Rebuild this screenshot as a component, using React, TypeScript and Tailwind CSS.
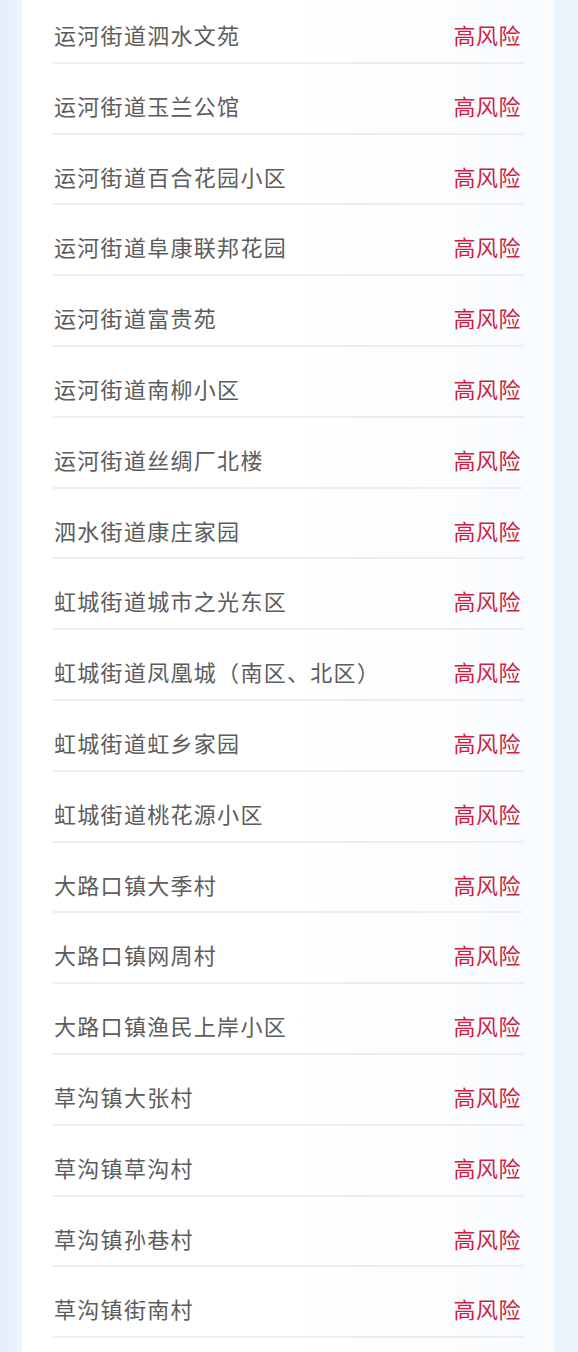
import React from "react";

const items = [
  "运河街道泗水文苑",
  "运河街道玉兰公馆",
  "运河街道百合花园小区",
  "运河街道阜康联邦花园",
  "运河街道富贵苑",
  "运河街道南柳小区",
  "运河街道丝绸厂北楼",
  "泗水街道康庄家园",
  "虹城街道城市之光东区",
  "虹城街道凤凰城（南区、北区）",
  "虹城街道虹乡家园",
  "虹城街道桃花源小区",
  "大路口镇大季村",
  "大路口镇网周村",
  "大路口镇渔民上岸小区",
  "草沟镇大张村",
  "草沟镇草沟村",
  "草沟镇孙巷村",
  "草沟镇街南村",
];

export default function App() {
  return (
    <div
      className="w-[578px] h-[1352px] overflow-hidden flex bg-[#e9f4fc]"
      style={{ fontFamily: '"Noto Sans CJK SC", "Noto Sans", sans-serif' }}
    >
      <div className="w-[22px] shrink-0 bg-gradient-to-r from-[#e2eef9] to-[#edf5fc]" />
      <div className="w-[532px] shrink-0 bg-gradient-to-r from-white via-white to-[#f8fbfe] px-[31px]">
        {items.map((name) => (
          <div
            key={name}
            className="flex items-center justify-between pt-[26px] first:pt-[19px] pb-[12.8px] border-b-2 border-[#eeeeee]"
          >
            <span className="text-[22px] leading-[30px] tracking-[1.3px] text-[#5c5c5c] pl-[1px]">
              {name}
            </span>
            <span className="text-[22px] leading-[30px] tracking-[0.5px] text-[#cc1f44] pr-[2px]">
              高风险
            </span>
          </div>
        ))}
      </div>
      <div className="flex-1 bg-[#e8f3fb]" />
    </div>
  );
}
